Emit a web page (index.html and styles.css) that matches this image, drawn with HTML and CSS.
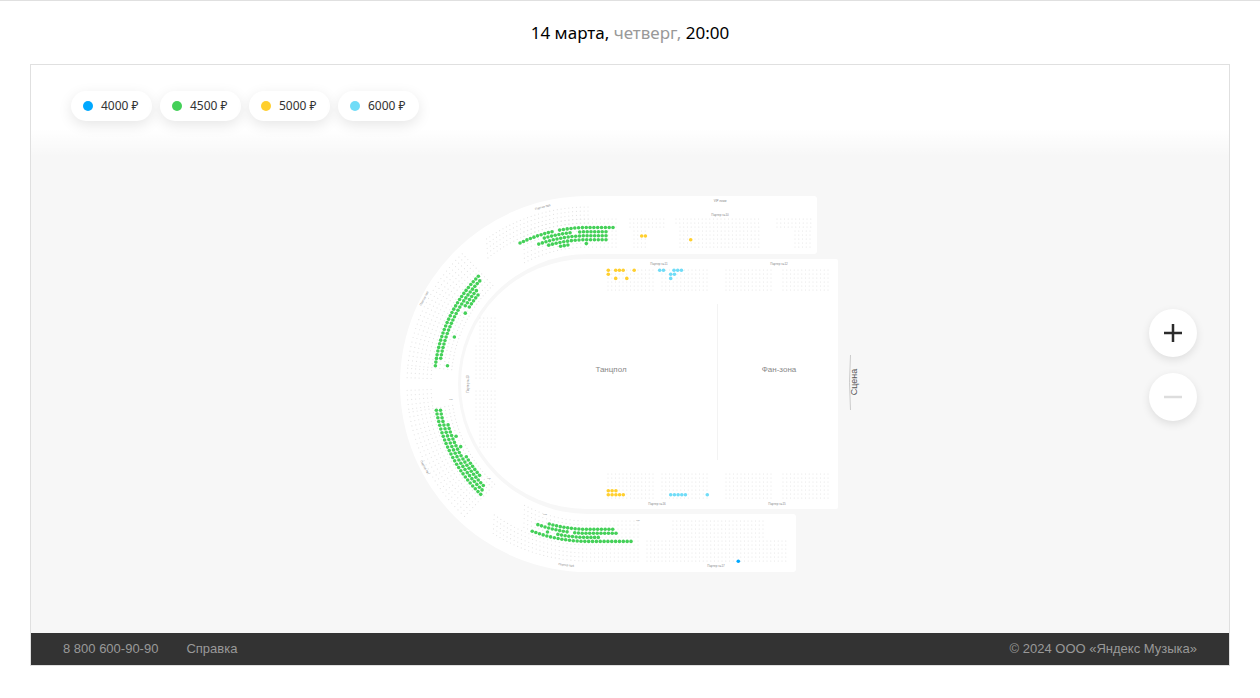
FILE: index.html
```
<!DOCTYPE html>
<html lang="ru">
<head>
<meta charset="utf-8">
<title>Выбор мест</title>
<link rel="stylesheet" href="styles.css">
</head>
<body>
<header class="session">14 марта, <span class="session-day">четверг,</span> 20:00</header>
<div class="widget">
  <main class="hall">
    <svg class="hall-map" viewBox="31 65 1198 568" role="img" aria-label="Схема зала">
      <path class="zone" d="M588 196H814Q817 196 817 199V251Q817 254 814 254H588A130 130 0 0 0 588 514H793Q796 514 796 517V569Q796 572 793 572H588A188 188 0 0 1 588 196Z"/>
      <path class="zone" d="M586 259H836Q838 259 838 261V507Q838 509 836 509H586A125 125 0 0 1 586 259Z"/>
      <path class="divider" d="M717.5 304V460"/>
      <path class="stage" d="M850.5 355Q848.5 382 850.5 410"/>
      <g id="seats"></g>
      <text class="area" x="611" y="372">Танцпол</text>
      <text class="area" x="779" y="372">Фан-зона</text>
      <text class="stage-name" transform="translate(857 382) rotate(-90)">Сцена</text>
      <g class="sector">
        <text x="720" y="202">VIP ложи</text>
        <text x="720" y="216">Партер №10</text>
        <text x="659" y="265">Партер №11</text>
        <text x="779" y="265">Партер №12</text>
        <text x="657" y="505">Партер №16</text>
        <text x="777" y="505">Партер №15</text>
        <text x="716" y="567">Партер №17</text>
        <text transform="translate(543 208) rotate(-14)">Партер №9</text>
        <text transform="translate(425 299) rotate(-62)">Партер №8</text>
        <text transform="translate(424 468) rotate(62)">Партер №7</text>
        <text transform="translate(566 566) rotate(8)">Партер №6</text>
        <text transform="translate(469 384) rotate(-90)">Партер №13</text>
      </g>
      <g class="sector row-mark">
        <text x="451" y="400">ряд</text>
        <text x="489" y="479">ряд</text>
        <text x="545" y="515">ряд</text>
        <text x="638" y="521">ряд</text>
      </g>
    </svg>
    <div class="legend">
      <button class="price" type="button"><span class="dot dot-blue"></span>4000 ₽</button>
      <button class="price" type="button"><span class="dot dot-green"></span>4500 ₽</button>
      <button class="price" type="button"><span class="dot dot-yellow"></span>5000 ₽</button>
      <button class="price" type="button"><span class="dot dot-cyan"></span>6000 ₽</button>
    </div>
    <div class="zoom">
      <button class="zoom-button" type="button" aria-label="Увеличить"><svg viewBox="0 0 20 20"><path d="M10 1V19M1 10H19"/></svg></button>
      <button class="zoom-button" type="button" aria-label="Уменьшить" disabled><svg viewBox="0 0 20 20"><path d="M1 10H19"/></svg></button>
    </div>
  </main>
  <footer class="footer">
    <a class="footer-link" href="tel:88006009090">8 800 600-90-90</a>
    <a class="footer-link" href="#help">Справка</a>
    <span class="copyright">© 2024 ООО «Яндекс Музыка»</span>
  </footer>
</div>
<script src="seats.js"></script>
</body>
</html>
```
FILE: styles.css
```
* { box-sizing: border-box; }

body {
  margin: 0;
  border-top: 1px solid #e0e0e0;
  background: #fff;
  font-family: "Liberation Sans", Arial, sans-serif;
}

.session {
  padding: 20px 32px 19px;
  font: 17px/24px "Noto Sans", sans-serif;
  text-align: center;
  color: #000;
}
.session-day { color: #999; }

.widget {
  margin: 0 30px 32px;
  border: 1px solid #e0e0e0;
}

.hall {
  position: relative;
  background: #f7f7f7;
}
.hall-map { display: block; width: 100%; height: auto; }

.zone { fill: #fff; }
.divider { stroke: #f3f3f3; stroke-width: 1; }
.stage { fill: none; stroke: #ccc; stroke-width: 1; }
.area, .stage-name, .sector {
  font-family: "Liberation Sans", Arial, sans-serif;
  text-anchor: middle;
}
.area { font-size: 8px; fill: #888; }
.stage-name { font-size: 9px; fill: #555; }
.sector { font-size: 3px; fill: #888; }
.row-mark { font-size: 2px; }

.seat-taken { fill: #e4e4e4; }
.seat-blue { fill: #00a8ff; }
.seat-green { fill: #44d058; }
.seat-yellow { fill: #ffcf2e; }
.seat-cyan { fill: #70dcf7; }

.legend {
  position: absolute;
  top: 0;
  left: 0;
  right: 0;
  display: flex;
  flex-wrap: wrap;
  gap: 8px;
  padding: 26px 40px 36px;
  background: linear-gradient(#fff 70%, rgba(255, 255, 255, 0));
}
.price {
  display: flex;
  align-items: center;
  gap: 8px;
  min-width: 81px;
  height: 30px;
  padding: 0 12px;
  border: 0;
  border-radius: 15px;
  background: #fff;
  box-shadow: 0 4px 14px rgba(0, 0, 0, 0.1);
  font: 12px/30px "Noto Sans", sans-serif;
  color: #333;
}
.dot { width: 10px; height: 10px; border-radius: 50%; }
.dot-blue { background: #00a8ff; }
.dot-green { background: #44d058; }
.dot-yellow { background: #ffcf2e; }
.dot-cyan { background: #70dcf7; }

.zoom {
  position: absolute;
  top: 32px;
  bottom: 0;
  right: 32px;
  display: flex;
  flex-direction: column;
  justify-content: center;
  gap: 16px;
}
.zoom-button {
  display: grid;
  place-items: center;
  width: 48px;
  height: 48px;
  padding: 0;
  border: 0;
  border-radius: 50%;
  background: #fff;
  box-shadow: 0 3px 8px rgba(0, 0, 0, 0.1);
  color: #2b2b2b;
}
.zoom-button:disabled { color: #ddd; }
.zoom-button svg { width: 20px; height: 20px; }
.zoom-button path { fill: none; stroke: currentColor; stroke-width: 2.5; }

.footer {
  display: flex;
  align-items: center;
  gap: 28px;
  min-height: 32px;
  padding: 0 32px;
  background: #333;
  font-size: 13px;
  line-height: 16px;
  color: #999;
}
.footer-link { color: inherit; text-decoration: none; }
.copyright { margin-left: auto; }
```
FILE: seats.js
```
const group = document.getElementById("seats");
const CX = 588, CY = 384;
const occupied = new Set();
const key = (x, y) => Math.round(x / 3) + ":" + Math.round(y / 3);

function seat(color, x, y) {
  if (color === "taken") {
    if (occupied.has(key(x, y))) return;
  } else {
    occupied.add(key(x, y));
  }
  const c = document.createElementNS("http://www.w3.org/2000/svg", "circle");
  c.setAttribute("class", "seat-" + color);
  c.setAttribute("cx", x.toFixed(2));
  c.setAttribute("cy", y.toFixed(2));
  c.setAttribute("r", color === "taken" ? 0.6 : 1.8);
  // Taken seats stay underneath the ones on sale.
  if (color === "taken") group.prepend(c);
  else group.append(c);
}

// Seats on the left curve; degrees above (+) or below (-) the horizontal axis.
function arc(color, r, from, to, n) {
  for (let i = 0; i < n; i++) {
    const a = (from + (n > 1 ? (to - from) * i / (n - 1) : 0)) * Math.PI / 180;
    seat(color, CX - r * Math.cos(a), CY - r * Math.sin(a));
  }
}

// Seats on a row that is curved before the centre and straight after it.
function row(color, side, r, from, to, n) {
  for (let i = 0; i < n; i++) {
    const s = from + (n > 1 ? (to - from) * i / (n - 1) : 0);
    if (s > 0) seat(color, CX + s, CY + side * r);
    else seat(color, CX + r * Math.sin(s / r), CY + side * r * Math.cos(s / r));
  }
}

function block(x0, x1, y0, y1) {
  for (let y = y0; y <= y1; y += 4)
    for (let x = x0; x <= x1; x += 3.75) seat("taken", x, y);
}

function list(color, y, xs) {
  xs.forEach(x => seat(color, x, y));
}

row("green", -1, 156.5, -70.3, -36.3, 10);
row("green", -1, 156.5, -28.5, 25, 15);
row("green", -1, 152.3, -44.3, -18, 8);
row("green", -1, 152.3, -8.3, 18, 8);
row("green", -1, 148.3, -50.2, 18, 19);
row("green", -1, 144.3, -39.8, 18, 16);
row("green", -1, 140.4, -27.6, -20.2, 3);
row("green", -1, 140.4, -1.7, -1.7, 1);

arc("green", 153.7, 44.5, 6.8, 28);
arc("green", 149.5, 43.6, 9.9, 25);
arc("green", 145.5, 39.9, 32.5, 6);
arc("green", 141.5, 39, 33, 5);
arc("green", 141.7, 30, 30, 1);
arc("green", 141.7, 19.4, 19.4, 1);
arc("green", 141.7, 7.4, 7.4, 1);

arc("green", 153.9, -9.8, -45.8, 26);
arc("green", 149.8, -10.1, -45, 25);
arc("green", 145.8, -16.3, -44.1, 20);
arc("green", 141.9, -21.6, -21.6, 1);
arc("green", 141.9, -26.2, -26.2, 1);
arc("green", 141.8, -30.9, -40.1, 7);

row("green", 1, 145.3, -39.2, 24.7, 18);
row("green", 1, 149.3, -51.1, -21, 9);
row("green", 1, 149.3, -13.3, 28, 12);
row("green", 1, 153.4, -41, -41, 1);
row("green", 1, 153.4, -30.3, 10.3, 12);
row("green", 1, 157.4, -57, 43, 27);

list("yellow", 236, [641.7, 645.4]);
list("yellow", 239.8, [690.7]);
list("yellow", 270.3, [608.3, 615.7, 619.4, 623.2, 634.2]);
list("yellow", 274.3, [608.3]);
list("yellow", 278.4, [615.7, 626.8]);
list("cyan", 270.3, [659.7, 663.5, 674, 677.7, 681.4]);
list("cyan", 274.3, [670.7, 674.4]);
list("cyan", 278.4, [670.7]);
list("yellow", 490.7, [608.3, 612.1, 615.9]);
list("yellow", 494.7, [608.3, 612.1, 615.9, 619.6, 623.3]);
list("cyan", 494.7, [670.7, 674.4, 678.1, 681.8, 685.4, 707.3]);
list("blue", 561.3, [738.3]);

for (let r = 161; r <= 178; r += 4) {
  row("taken", -1, r, -108, 0, 29);
  row("taken", 1, r, -100, 50, 39);
}
for (let r = 137; r <= 165; r += 4) row("taken", -1, r, -66, 28, 25);
for (let r = 137; r <= 157; r += 4) row("taken", 1, r, -66, 50, 30);
for (let r = 137; r <= 182; r += 4) {
  arc("taken", r, 46, 6, 28);
  arc("taken", r, -9, -47, 27);
}
for (let r = 157; r <= 182; r += 4) {
  arc("taken", r, 5, 2, 3);
  arc("taken", r, -2, -8, 5);
}

block(630, 664, 219, 227);
block(634, 648, 231, 247);
block(676, 762, 219, 223);
block(680, 759, 227, 247);
block(777, 811, 219, 227);
block(795, 810, 231, 247);
block(608, 654, 270, 290);
block(662, 710, 270, 290);
block(726, 774, 270, 290);
block(783, 831, 270, 290);
block(608, 654, 474, 498);
block(662, 710, 474, 498);
block(726, 774, 474, 498);
block(783, 831, 474, 498);
block(673, 763, 521, 537);
block(647, 789, 541, 561);
block(480, 498, 318, 378);
block(476, 478, 346, 378);
block(480, 498, 391, 449);
block(476, 478, 391, 420);
```
